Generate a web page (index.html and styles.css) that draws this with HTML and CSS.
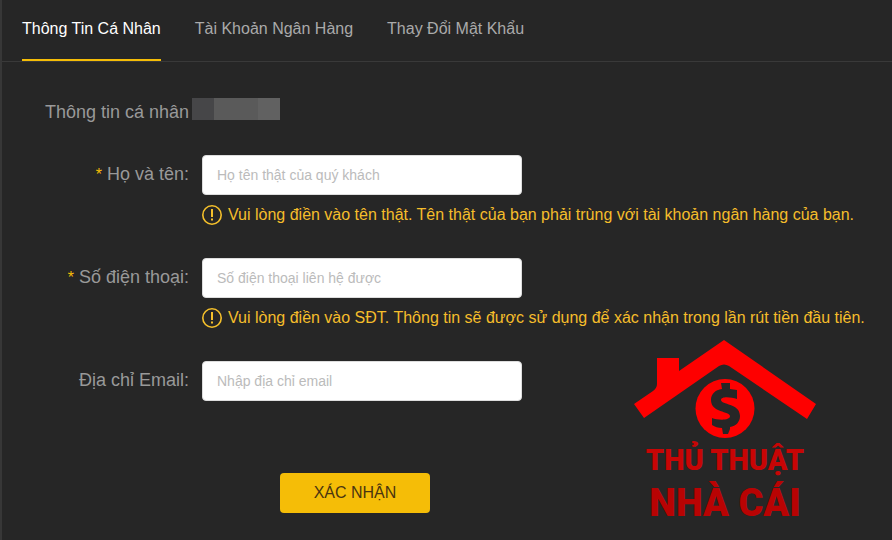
FILE: index.html
```html
<!DOCTYPE html>
<html lang="vi">
<head>
<meta charset="utf-8">
<meta name="viewport" content="width=device-width, initial-scale=1">
<title>Thông Tin Cá Nhân</title>
<link rel="stylesheet" href="styles.css">
</head>
<body>
<main class="panel">
  <nav class="tabs">
    <a class="tab tab-active" href="#profile" aria-current="page">Thông Tin Cá Nhân</a>
    <a class="tab" href="#bank">Tài Khoản Ngân Hàng</a>
    <a class="tab" href="#password">Thay Đổi Mật Khẩu</a>
  </nav>

  <form class="form" id="profile">
    <div class="row row-account">
      <span class="label">Thông tin cá nhân</span>
      <span class="masked"></span>
    </div>

    <div class="row">
      <label class="label" for="fullname"><span class="required">*</span> Họ và tên:</label>
      <input class="input" id="fullname" type="text" placeholder="Họ tên thật của quý khách">
      <p class="hint">
        <svg class="hint-icon" viewBox="0 0 20 22" aria-hidden="true">
          <circle cx="10" cy="11" r="9.2"/>
          <path d="M9 5H11V13H9ZM9 14.500H11V16.500H9Z"/>
        </svg>
        Vui lòng điền vào tên thật. Tên thật của bạn phải trùng với tài khoản ngân hàng của bạn.
      </p>
    </div>

    <div class="row">
      <label class="label" for="phone"><span class="required">*</span> Số điện thoại:</label>
      <input class="input" id="phone" type="tel" placeholder="Số điện thoại liên hệ được">
      <p class="hint">
        <svg class="hint-icon" viewBox="0 0 20 22" aria-hidden="true">
          <circle cx="10" cy="11" r="9.2"/>
          <path d="M9 5H11V13H9ZM9 14.500H11V16.500H9Z"/>
        </svg>
        Vui lòng điền vào SĐT. Thông tin sẽ được sử dụng để xác nhận trong lần rút tiền đầu tiên.
      </p>
    </div>

    <div class="row">
      <label class="label" for="email">Địa chỉ Email:</label>
      <input class="input" id="email" type="email" placeholder="Nhập địa chỉ email">
    </div>

    <div class="row row-submit">
      <button class="submit" type="submit">XÁC NHẬN</button>
    </div>
  </form>

  <div class="brand">
    <svg class="brand-mark" viewBox="0 0 184 100" aria-hidden="true">
      <path class="brand-fill" d="M91 0L183 64L174 79L96 26Q91 23 86 26L11 78L1 64L20 51Q24 48 24 44V18H46V31Z"/>
      <circle class="brand-fill" cx="92" cy="68.500" r="29.500"/>
      <path class="brand-coin" d="M88 43H97V49L104 50V59C98 57 88 56 88 60C88 65 107 63 107 76C107 82 103 86 97 87V89L95 94H90L89 88C85 88 82 87 79 85V78C84 80 97 81 97 76C97 71 78 73 78 60C78 54 82 50 89 49Z"/>
    </svg>
    <div class="brand-line">THỦ THUẬT</div>
    <div class="brand-line brand-line-large">NHÀ CÁI</div>
  </div>
</main>
</body>
</html>
```
FILE: styles.css
```css
* {
  box-sizing: border-box;
}

body {
  margin: 0;
  background: #262626;
  font-family: "Liberation Sans", Arial, sans-serif;
  font-size: 16px;
}

.panel {
  position: relative;
  min-height: 100vh;
  border-left: 2px solid #373737;
}

.tabs {
  display: flex;
  gap: 34px;
  padding: 0 20px;
  border-bottom: 1px solid #393939;
}

.tab {
  padding: 19px 0 20px;
  border-bottom: 2px solid transparent;
  color: #aaa;
  line-height: 20px;
  text-decoration: none;
}

.tab-active {
  border-color: #f5bd07;
  color: #fff;
}

.form {
  padding-top: 36px;
}

.row {
  display: grid;
  grid-template-columns: 187px minmax(0, 1fr);
  column-gap: 13px;
  align-items: center;
  margin-bottom: 32px;
}

.label {
  padding-bottom: 2px;
  color: #999;
  font-size: 18px;
  line-height: 22px;
  text-align: right;
}

.row-account {
  column-gap: 3px;
  align-items: start;
  margin-bottom: 32px;
}

.row-account .label {
  padding: 3px 0 0;
}

.required {
  color: #f5bd07;
  font-size: 16px;
}

.masked {
  width: 88px;
  height: 22px;
  background: linear-gradient(90deg, #464648 25%, #5a5a5a 25%, #5a5a5a 75%, #616161 75%);
}

.input {
  width: 320px;
  max-width: 100%;
  height: 40px;
  padding: 0 14px;
  border: 1px solid #ddd;
  border-radius: 4px;
  background: #fff;
  color: #333;
  font: 14px "Liberation Sans", Arial, sans-serif;
}

.input::placeholder {
  color: #bbb;
}

.hint {
  display: flex;
  grid-column: 2;
  gap: 6px;
  margin: 9px 0 0;
  color: #f5bd2b;
  line-height: 22px;
}

.hint-icon {
  flex: none;
  width: 20px;
  height: 22px;
  fill: #f5c02b;
}

.hint-icon circle {
  fill: none;
  stroke: #f5c02b;
  stroke-width: 1.6;
}

.row-submit {
  margin: 72px 0 0;
}

.submit {
  grid-column: 2;
  width: 150px;
  height: 40px;
  margin-left: 78px;
  border: 0;
  border-radius: 4px;
  background: #f5bd07;
  color: #4a3510;
  font: 16px "Liberation Sans", Arial, sans-serif;
}

.brand {
  position: absolute;
  right: 75px;
  bottom: 14px;
  width: 184px;
  color: #c80505;
  font-family: Roboto, "Liberation Sans", sans-serif;
  font-weight: 900;
  text-align: center;
}

.brand-mark {
  display: block;
  width: 100%;
}

.brand-fill {
  fill: #fe0000;
}

.brand-coin {
  fill: #262626;
}

.brand-line {
  font-size: 29px;
  line-height: 40px;
  white-space: nowrap;
}

.brand-line-large {
  color: #b80303;
  font-size: 38px;
  line-height: 46px;
}
```
